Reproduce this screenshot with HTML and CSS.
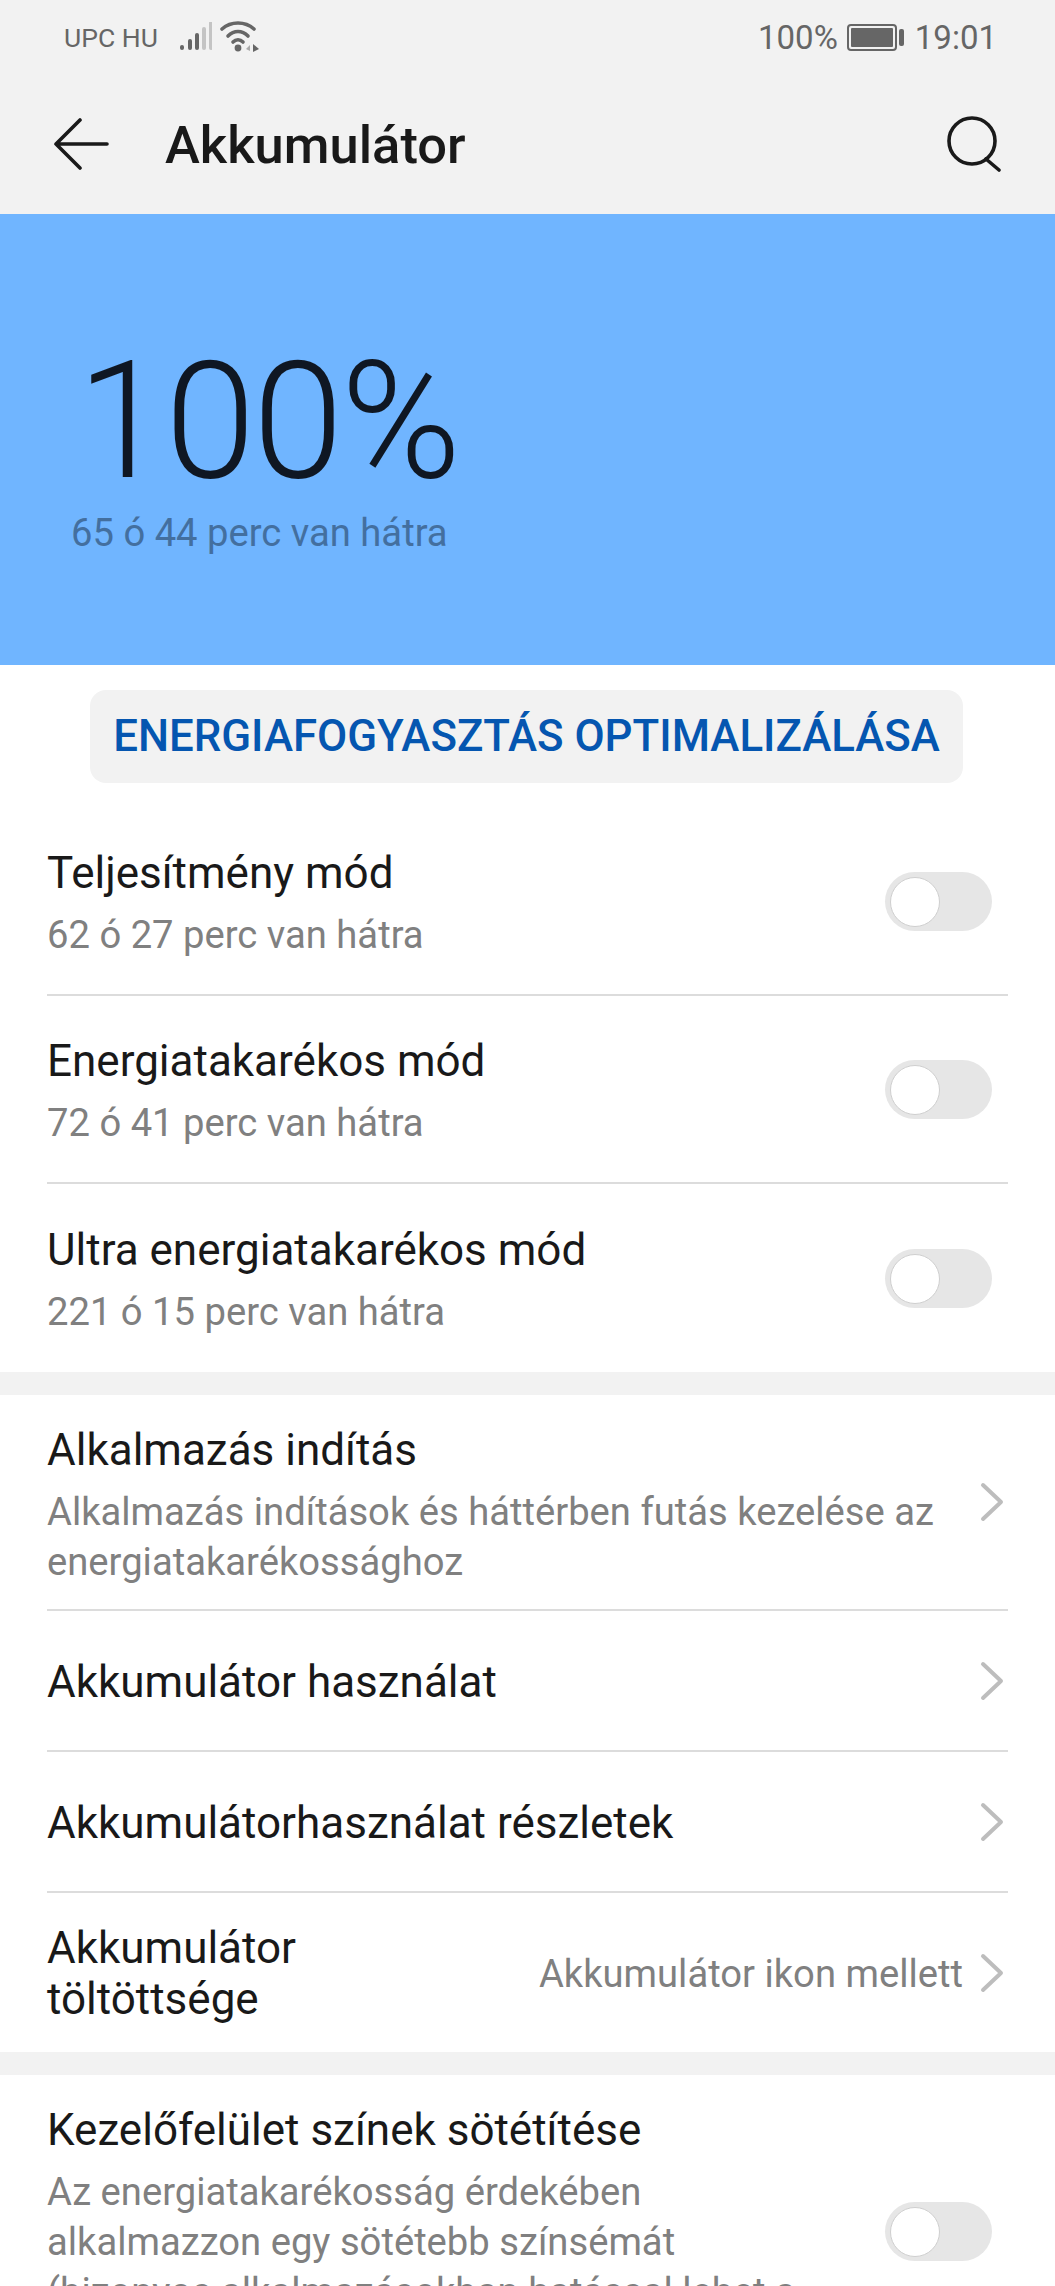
FILE: index.html
```html
<!DOCTYPE html>
<html lang="hu">
<head>
  <meta charset="UTF-8" />
  <meta name="viewport" content="width=device-width, initial-scale=1.0"/>
  <title>Akkumulátor</title>
  <link rel="stylesheet" href="styles.css">
</head>
<body>
  <div class="top">
    <div class="statusbar">
      <div class="status-left">
        <span class="carrier">UPC HU</span>
        <svg class="signal" width="32" height="30" viewBox="0 0 32 30">
          <g stroke-width="4" stroke-linecap="round" fill="none">
            <path d="M2 26v-1" stroke="#666"/>
            <path d="M10 26v-7" stroke="#666"/>
            <path d="M17 26v-13" stroke="#666"/>
            <path d="M24 26v-19" stroke="#c4c4c4"/>
            <path d="M31 26v-25" stroke="#c4c4c4"/>
          </g>
        </svg>
        <svg class="wifi" width="40" height="32" viewBox="0 0 40 32">
          <g fill="none" stroke="#666" stroke-width="3.6" stroke-linecap="round">
            <path d="M2 8 C11 0 25 0 34 8"/>
            <path d="M8 15 C14 9 22 9 28 15"/>
            <path d="M13 21 C16 18 20 18 23 21"/>
          </g>
          <circle cx="18" cy="27" r="3.4" fill="#666"/>
          <path d="M26 28l4-4v6z" fill="#aaa"/>
          <path d="M33 23l6 5-6 3z" fill="#666"/>
        </svg>
      </div>
      <div class="status-right">
        <span>100%</span>
        <span class="battery"><span class="battery-fill"></span></span>
        <span class="battery-tip"></span>
        <span class="clock">19:01</span>
      </div>
    </div>
    <div class="titlebar">
      <svg class="icon-back" width="56" height="52" viewBox="0 0 56 52">
        <path d="M27 2 L3 26 L27 50 M3 26 H54" fill="none" stroke="#1a1a1a" stroke-width="3.6" stroke-linecap="round" stroke-linejoin="round"/>
      </svg>
      <h1>Akkumulátor</h1>
      <svg class="icon-search" width="56" height="56" viewBox="0 0 56 56">
        <circle cx="26" cy="25" r="23" fill="none" stroke="#1a1a1a" stroke-width="3.6"/>
        <path d="M40 43 L53 54" fill="none" stroke="#1a1a1a" stroke-width="3.6" stroke-linecap="round"/>
      </svg>
    </div>
  </div>

  <div class="hero">
    <div class="percent">100%</div>
    <div class="hero-sub">65 ó 44 perc van hátra</div>
  </div>

  <div class="btn-wrap">
    <div class="optimize">ENERGIAFOGYASZTÁS OPTIMALIZÁLÁSA</div>
  </div>

  <div class="group">
    <div class="row row-mode">
      <div class="row-text">
        <div class="title">Teljesítmény mód</div>
        <div class="sub">62 ó 27 perc van hátra</div>
      </div>
      <div class="toggle"><div class="knob"></div></div>
    </div>
    <div class="row row-mode">
      <div class="row-text">
        <div class="title">Energiatakarékos mód</div>
        <div class="sub">72 ó 41 perc van hátra</div>
      </div>
      <div class="toggle"><div class="knob"></div></div>
    </div>
    <div class="row row-mode last">
      <div class="row-text">
        <div class="title">Ultra energiatakarékos mód</div>
        <div class="sub">221 ó 15 perc van hátra</div>
      </div>
      <div class="toggle"><div class="knob"></div></div>
    </div>
  </div>

  <div class="group-gap"></div>

  <div class="group">
    <div class="row row-app">
      <div class="row-text">
        <div class="title">Alkalmazás indítás</div>
        <div class="sub">Alkalmazás indítások és háttérben futás kezelése az energiatakarékossághoz</div>
      </div>
      <svg class="chevron" width="24" height="40" viewBox="0 0 24 40"><path d="M3 3 L21 20 L3 37" /></svg>
    </div>
    <div class="row row-link">
      <div class="row-text"><div class="title">Akkumulátor használat</div></div>
      <svg class="chevron" width="24" height="40" viewBox="0 0 24 40"><path d="M3 3 L21 20 L3 37" /></svg>
    </div>
    <div class="row row-link">
      <div class="row-text"><div class="title">Akkumulátorhasználat részletek</div></div>
      <svg class="chevron" width="24" height="40" viewBox="0 0 24 40"><path d="M3 3 L21 20 L3 37" /></svg>
    </div>
    <div class="row row-charge last">
      <div class="row-text"><div class="title narrow">Akkumulátor töltöttsége</div></div>
      <div class="value">Akkumulátor ikon mellett</div>
      <svg class="chevron" width="24" height="40" viewBox="0 0 24 40"><path d="M3 3 L21 20 L3 37" /></svg>
    </div>
  </div>

  <div class="group-gap"></div>

  <div class="group">
    <div class="row row-dark last">
      <div class="row-text dark-text">
        <div class="title">Kezelőfelület színek sötétítése</div>
        <div class="sub">Az energiatakarékosság érdekében alkalmazzon egy sötétebb színsémát (bizonyos alkalmazásokban hatással lehet a</div>
      </div>
      <div class="toggle"><div class="knob"></div></div>
    </div>
  </div>
</body>
</html>
```

FILE: styles.css
```css
html, body {
  margin: 0;
  height: 2286px;
  overflow: hidden;
}
body {
  font-family: Roboto, "Liberation Sans", sans-serif;
  background: #fff;
  color: #191919;
}

/* top area */
.top {
  background: #f2f2f2;
  height: 214px;
}
.statusbar {
  height: 74px;
  display: flex;
  justify-content: space-between;
  align-items: center;
  padding: 0 58px 0 64px;
  color: #666;
}
.status-left, .status-right {
  display: flex;
  align-items: center;
}
.carrier {
  font-size: 26.5px;
  margin-right: 22px;
}
.signal {
  margin-right: 8px;
}
.status-right {
  font-size: 33px;
}
.battery {
  width: 42px;
  height: 19px;
  border: 2px solid #666;
  border-radius: 4px;
  padding: 2px;
  margin-left: 9px;
  display: flex;
}
.battery-fill {
  flex: 1;
  background: #666;
  border-radius: 1px;
}
.battery-tip {
  width: 5px;
  height: 17px;
  background: #666;
  border-radius: 2px;
  margin: 0 11px 0 2px;
}
.titlebar {
  height: 140px;
  display: flex;
  align-items: center;
  padding: 0 53px 0 53px;
}
.titlebar h1 {
  flex: 1;
  margin: 2px 0 0 56px;
  font-size: 52.5px;
  font-weight: 500;
}

/* blue header */
.hero {
  background: #70b5ff;
  height: 451px;
  padding: 0 71px;
  box-sizing: border-box;
}
.percent {
  font-size: 163px;
  font-weight: 300;
  line-height: 178px;
  letter-spacing: -2.5px;
  padding-top: 119px;
  margin-left: 6px;
  color: #0f1723;
}
.hero-sub {
  font-size: 38.2px;
  color: #436f9f;
  line-height: 44px;
}

.btn-wrap {
  padding: 25px 92px 25px 90px;
}
.optimize {
  background: #f2f2f2;
  border-radius: 16px;
  height: 93px;
  line-height: 93px;
  text-align: center;
  font-size: 43.8px;
  font-weight: 500;
  color: #0556b0;
  white-space: nowrap;
}

/* settings list */
.group {
  padding: 0 47px;
}
.group-gap {
  height: 23px;
  background: #f2f2f2;
}
.row {
  display: flex;
  align-items: center;
  box-sizing: border-box;
  border-bottom: 2px solid #dcdcdc;
}
.row.last {
  border-bottom: 0;
}
.row-mode {
  height: 188px;
}
.row-mode .row-text {
  padding-top: 6px;
}
.row-app .row-text {
  padding: 8px 40px 0 0;
}
.row-link .row-text, .row-charge .row-text {
  padding-top: 3px;
}
.row-app {
  height: 216px;
}
.row-link {
  height: 141px;
}
.row-charge {
  height: 159px;
}
.row-dark {
  height: 300px;
  align-items: flex-start;
}
.row-text {
  flex: 1;
}
.title {
  font-size: 44px;
  line-height: 51px;
  color: #191919;
}
.sub {
  font-size: 38.2px;
  line-height: 50px;
  color: #808080;
  margin-top: 11px;
}
.narrow {
  width: 300px;
}
.value {
  font-size: 38.2px;
  color: #808080;
  margin: 3px 17px 0 0;
}
.toggle {
  width: 107px;
  height: 59px;
  background: #e6e6e6;
  border-radius: 30px;
  margin-right: 16px;
  flex-shrink: 0;
  box-sizing: border-box;
  padding: 5px 0 0 5px;
}
.knob {
  width: 50px;
  height: 50px;
  box-sizing: border-box;
  background: #fff;
  border: 1px solid #cfcfcf;
  border-radius: 50%;
}
.chevron {
  margin: 0 4px 0 0;
  flex-shrink: 0;
}
.chevron path {
  fill: none;
  stroke: #bdbdbd;
  stroke-width: 4;
  stroke-linecap: round;
  stroke-linejoin: round;
}
.dark-text {
  padding: 30px 38px 0 0;
}
.row-dark .toggle {
  margin-top: 127px;
}
```
